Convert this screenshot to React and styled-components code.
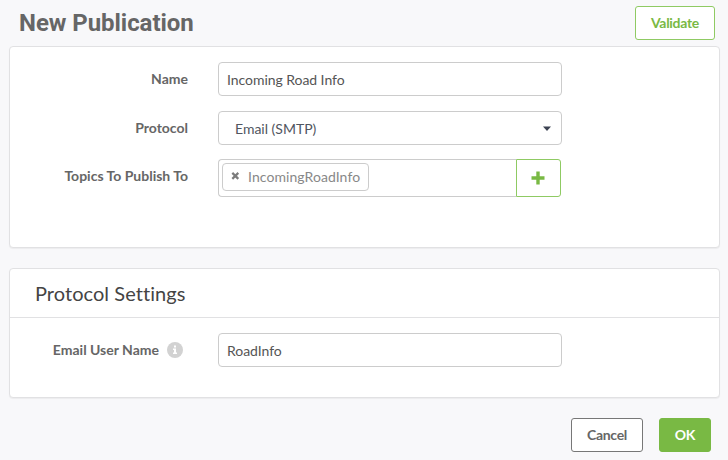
import React from 'react';
import styled, { createGlobalStyle, css } from 'styled-components';

const GlobalStyle = createGlobalStyle`
  *, *::before, *::after { box-sizing: border-box; }
  body {
    margin: 0;
    background: #f8f8fa;
    font-family: Lato, 'Liberation Sans', sans-serif;
    font-size: 14px;
    line-height: 20px;
    color: #555;
  }
`;

const Page = styled.main`
  height: 460px;
  padding: 0 8px 0 9px;
  display: flex;
  flex-direction: column;
  overflow: hidden;
`;

const Header = styled.header`
  height: 46px;
  flex: none;
  padding: 6px 5px 0 10px;
  display: flex;
  justify-content: space-between;
  align-items: flex-start;
`;

const Title = styled.h1`
  margin: 0;
  font: 700 24px/34px Roboto, sans-serif;
  letter-spacing: -0.05px;
  color: #666;
`;

const variants = {
  outline: css`
    width: 80px;
    color: #79b944;
    border-color: #8fca63;
    background: #fff;
  `,
  neutral: css`
    width: 72px;
    color: #666;
    border-color: #777;
    background: #fff;
  `,
  primary: css`
    width: 52px;
    color: #fff;
    border-color: #79b944;
    background: #79b944;
  `,
};

const Button = styled.button`
  height: 34px;
  padding: 0;
  border: 1px solid;
  border-radius: 3px;
  font: 700 14px/20px Lato, sans-serif;
  letter-spacing: -0.3px;
  ${({ $variant }) => variants[$variant]}
`;

const Card = styled.section`
  height: ${({ $height }) => $height}px;
  flex: none;
  border: 1px solid #e1e1e3;
  border-radius: 4px;
  background: #fff;
  box-shadow: 0 1px 1px rgba(0, 0, 0, 0.05);
  & + & { margin-top: 20px; }
`;

const CardTitle = styled.h2`
  margin: 0;
  height: 49px;
  padding-left: 25px;
  border-bottom: 1px solid #e1e1e3;
  font-weight: 400;
  font-size: 20px;
  line-height: 48px;
  letter-spacing: 0.05px;
  color: #444;
`;

const Fields = styled.div`
  padding-top: 15px;
  display: flex;
  flex-direction: column;
  gap: ${({ $gap }) => $gap || 0}px;
`;

const Field = styled.div`
  display: grid;
  grid-template-columns: 178px 344px;
  column-gap: 30px;
  align-items: start;
  & + &:last-child { margin-top: -1px; }
`;

const Label = styled.label`
  padding: 7px 0 0;
  display: flex;
  justify-content: flex-end;
  align-items: center;
  gap: 8px;
  padding-right: ${({ $inset }) => $inset || 0}px;
  font-weight: 700;
  color: #666;
  white-space: nowrap;
`;

const TextInput = styled.input`
  width: 100%;
  height: 34px;
  padding: 1px 8px;
  border: 1px solid #ccc;
  border-radius: 4px;
  outline: 0;
  background: #fff;
  font: 400 14px/20px Lato, sans-serif;
  letter-spacing: -0.05px;
  color: #555;
`;

const SelectButton = styled.button`
  width: 100%;
  height: 34px;
  padding: 1px 9px 0 16px;
  display: flex;
  justify-content: space-between;
  align-items: center;
  border: 1px solid #ccc;
  border-radius: 4px;
  background: #fff;
  font: 400 14px/20px Lato, sans-serif;
  color: #505560;
`;

const TagGroup = styled.div`
  width: 343px;
  height: 38px;
  display: flex;
`;

const TagBox = styled.div`
  flex: 1;
  padding: 3px;
  border: 1px solid #ccc;
  border-right: 0;
  border-radius: 4px 0 0 4px;
`;

const Tag = styled.span`
  width: 147px;
  height: 28px;
  padding: 0 0 1px 8px;
  display: flex;
  align-items: center;
  gap: 8px;
  border: 1px solid #ccc;
  border-radius: 4px;
  letter-spacing: 0.07px;
  color: #888;
`;

const AddButton = styled.button`
  width: 45px;
  padding: 0 2px 1px 0;
  display: grid;
  place-items: center;
  border: 1px solid #8fca63;
  border-radius: 0 3px 3px 0;
  background: #fff;
`;

const Footer = styled.footer`
  margin-top: 20px;
  padding-right: 9px;
  display: flex;
  justify-content: flex-end;
  gap: 16px;
`;

const CaretIcon = () => (
  <svg width="10" height="6" viewBox="0 0 10 6" aria-hidden="true">
    <path d="M1 .5h8L5 5z" fill="#3d4352" />
  </svg>
);

const RemoveIcon = () => (
  <svg width="9" height="9" viewBox="0 0 9 9" aria-hidden="true">
    <path d="M1.3 .9l6 6M7.3 .9l-6 6" stroke="#7c7c7c" strokeWidth="2.2" />
  </svg>
);

const PlusIcon = () => (
  <svg width="14" height="14" viewBox="0 0 14 14" aria-hidden="true">
    <path d="M7 .5v13M.5 7h13" stroke="#79b944" strokeWidth="3.4" />
  </svg>
);

const InfoIcon = () => (
  <svg width="16" height="16" viewBox="0 0 16 16" aria-hidden="true">
    <circle cx="8" cy="8" r="8" fill="#d2d2d2" />
    <path d="M7 3.5h2v2H7zM6 6.5h3v4h1V12H6v-1.5h1V8H6z" fill="#fff" />
  </svg>
);

export default function App() {
  return (
    <Page>
      <GlobalStyle />
      <Header>
        <Title>New Publication</Title>
        <Button $variant="outline">Validate</Button>
      </Header>
      <Card $height={202}>
        <Fields $gap={15}>
          <Field>
            <Label htmlFor="name">Name</Label>
            <TextInput id="name" defaultValue="Incoming Road Info" />
          </Field>
          <Field>
            <Label>Protocol</Label>
            <SelectButton>
              Email (SMTP)
              <CaretIcon />
            </SelectButton>
          </Field>
          <Field>
            <Label>Topics To Publish To</Label>
            <TagGroup>
              <TagBox>
                <Tag><RemoveIcon />IncomingRoadInfo</Tag>
              </TagBox>
              <AddButton aria-label="Add topic"><PlusIcon /></AddButton>
            </TagGroup>
          </Field>
        </Fields>
      </Card>
      <Card $height={130}>
        <CardTitle>Protocol Settings</CardTitle>
        <Fields>
          <Field>
            <Label htmlFor="user" $inset={5}>
              Email User Name
              <InfoIcon />
            </Label>
            <TextInput id="user" defaultValue="RoadInfo" />
          </Field>
        </Fields>
      </Card>
      <Footer>
        <Button $variant="neutral">Cancel</Button>
        <Button $variant="primary">OK</Button>
      </Footer>
    </Page>
  );
}
